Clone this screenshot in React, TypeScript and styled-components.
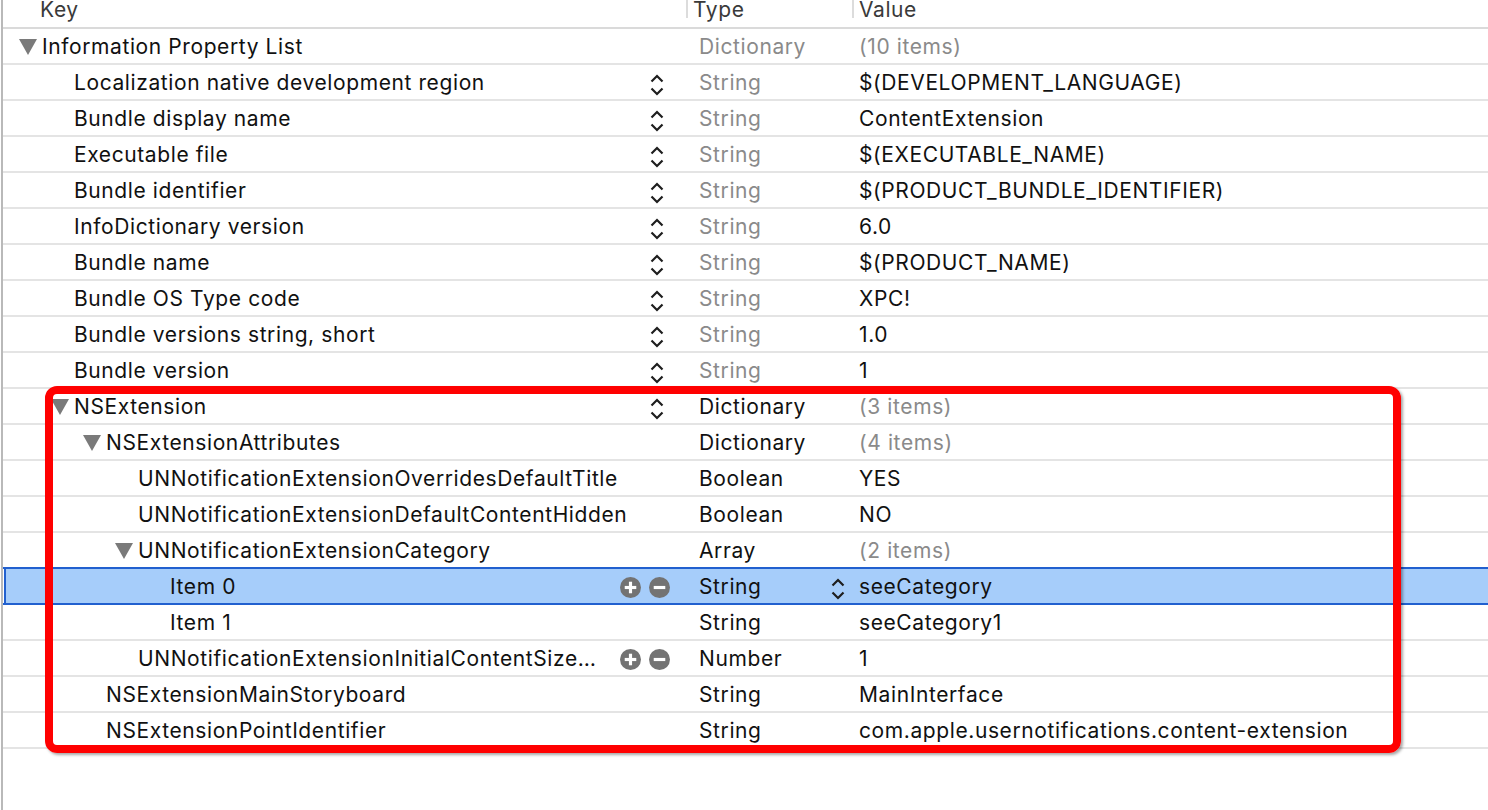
import React from "react";
import styled, { createGlobalStyle } from "styled-components";

type Entry = {
  key: string;
  level: number;
  open?: boolean;
  control?: "stepper" | "addremove";
  type: string;
  typeMuted?: boolean;
  value: string;
  valueMuted?: boolean;
  valueStepper?: boolean;
  selected?: boolean;
};

const entries: Entry[] = [
  { key: "Information Property List", level: 0, open: true, type: "Dictionary", typeMuted: true, value: "(10 items)", valueMuted: true },
  { key: "Localization native development region", level: 1, control: "stepper", type: "String", typeMuted: true, value: "$(DEVELOPMENT_LANGUAGE)" },
  { key: "Bundle display name", level: 1, control: "stepper", type: "String", typeMuted: true, value: "ContentExtension" },
  { key: "Executable file", level: 1, control: "stepper", type: "String", typeMuted: true, value: "$(EXECUTABLE_NAME)" },
  { key: "Bundle identifier", level: 1, control: "stepper", type: "String", typeMuted: true, value: "$(PRODUCT_BUNDLE_IDENTIFIER)" },
  { key: "InfoDictionary version", level: 1, control: "stepper", type: "String", typeMuted: true, value: "6.0" },
  { key: "Bundle name", level: 1, control: "stepper", type: "String", typeMuted: true, value: "$(PRODUCT_NAME)" },
  { key: "Bundle OS Type code", level: 1, control: "stepper", type: "String", typeMuted: true, value: "XPC!" },
  { key: "Bundle versions string, short", level: 1, control: "stepper", type: "String", typeMuted: true, value: "1.0" },
  { key: "Bundle version", level: 1, control: "stepper", type: "String", typeMuted: true, value: "1" },
  { key: "NSExtension", level: 1, open: true, control: "stepper", type: "Dictionary", value: "(3 items)", valueMuted: true },
  { key: "NSExtensionAttributes", level: 2, open: true, type: "Dictionary", value: "(4 items)", valueMuted: true },
  { key: "UNNotificationExtensionOverridesDefaultTitle", level: 3, type: "Boolean", value: "YES" },
  { key: "UNNotificationExtensionDefaultContentHidden", level: 3, type: "Boolean", value: "NO" },
  { key: "UNNotificationExtensionCategory", level: 3, open: true, type: "Array", value: "(2 items)", valueMuted: true },
  { key: "Item 0", level: 4, control: "addremove", type: "String", value: "seeCategory", valueStepper: true, selected: true },
  { key: "Item 1", level: 4, type: "String", value: "seeCategory1" },
  { key: "UNNotificationExtensionInitialContentSizeRatio", level: 3, control: "addremove", type: "Number", value: "1" },
  { key: "NSExtensionMainStoryboard", level: 2, type: "String", value: "MainInterface" },
  { key: "NSExtensionPointIdentifier", level: 2, type: "String", value: "com.apple.usernotifications.content-extension" },
];

const GlobalStyle = createGlobalStyle`
  body {
    margin: 0;
    background: #fff;
    font-family: Inter, "Noto Sans", "Liberation Sans", sans-serif;
    color: #111;
  }
`;

const Page = styled.div`
  position: relative;
  width: 1486px;
  height: 810px;
  margin-left: 1px;
  border-left: 2px solid #b9b9b9;
  overflow: hidden;
  font-size: 21px;
  letter-spacing: 0.6px;
`;

const Header = styled.div`
  display: grid;
  grid-template-columns: 683px 166px 1fr;
  height: 29px;
  border-bottom: 2px solid #dadada;
  box-sizing: border-box;
`;

const HeaderCell = styled.div<{ $pad: number; $rule?: boolean }>`
  height: 23px;
  padding-left: ${(p) => p.$pad}px;
  border-left: ${(p) => (p.$rule ? "2px solid #dcdcdc" : "none")};
  line-height: 20px;
  margin-top: -5px;
  padding-top: 5px;
  color: #3a3a3a;
  box-sizing: border-box;
`;

const Row = styled.div<{ $selected?: boolean }>`
  display: grid;
  grid-template-columns: 683px 166px 1fr;
  height: ${(p) => (p.$selected ? "38px" : "36px")};
  margin-top: ${(p) => (p.$selected ? "-2px" : "0")};
  box-sizing: border-box;
  border-top: ${(p) => (p.$selected ? "2px solid #2160cf" : "none")};
  border-bottom: 2px solid ${(p) => (p.$selected ? "#2160cf" : "#e4e4e4")};
  box-shadow: ${(p) => (p.$selected ? "inset 1px 0 0 #fff, inset 3px 0 0 #2160cf" : "none")};
  background: ${(p) => (p.$selected ? "#a6cdfa" : "transparent")};
`;

const KeyCell = styled.div<{ $level: number }>`
  display: flex;
  align-items: center;
  min-width: 0;
  padding-left: ${(p) => 16 + p.$level * 32}px;
`;

const Toggle = styled.span`
  width: 23px;
  flex: none;
  display: flex;
  align-items: center;
`;

const KeyText = styled.span`
  flex: 1;
  min-width: 0;
  white-space: nowrap;
  overflow: hidden;
  text-overflow: ellipsis;
  margin-right: 24px;
`;

const Controls = styled.span`
  flex: none;
  display: flex;
  align-items: center;
  gap: 8px;
  margin-right: 16px;
`;

const StepperSlot = styled.span`
  flex: none;
  display: flex;
  margin-right: 22px;
`;

const TypeCell = styled.div<{ $muted?: boolean }>`
  display: flex;
  align-items: center;
  justify-content: space-between;
  padding-left: 13px;
  padding-right: 7px;
  color: ${(p) => (p.$muted ? "#8a8a8a" : "#111")};
`;

const ValueCell = styled.div<{ $muted?: boolean }>`
  display: flex;
  align-items: center;
  padding-left: 7px;
  white-space: nowrap;
  color: ${(p) => (p.$muted ? "#8a8a8a" : "#111")};
`;

const Callout = styled.div`
  position: absolute;
  left: 42px;
  top: 386px;
  width: 1356px;
  height: 367px;
  box-sizing: border-box;
  border: 8px solid #ff0000;
  border-radius: 12px;
  box-shadow: 2px 2px 3px rgba(0, 0, 0, 0.35);
  pointer-events: none;
`;

const Disclosure = () => (
  <svg width="18" height="16" viewBox="0 0 18 16" style={{ marginTop: 2 }}>
    <path d="M0 0 H18 L9 16 Z" fill="#7a7a7a" />
  </svg>
);

const Stepper = () => (
  <svg width="14" height="22" viewBox="0 0 14 22" style={{ marginTop: 6 }}>
    <path d="M1.5 7.5 L7 2 L12.5 7.5 M1.5 14.5 L7 20 L12.5 14.5" fill="none" stroke="#1e1e1e" strokeWidth="2.2" />
  </svg>
);

const Round = ({ plus }: { plus?: boolean }) => (
  <svg width="21" height="21" viewBox="0 0 20 20" style={{ marginTop: 3 }}>
    <circle cx="10" cy="10" r="10" fill="#737373" />
    <rect x="4.5" y="8.5" width="11" height="3" fill="#fff" />
    {plus && <rect x="8.5" y="4.5" width="3" height="11" fill="#fff" />}
  </svg>
);

const PlistRow: React.FC<{ entry: Entry }> = ({ entry }) => (
  <Row $selected={entry.selected}>
    <KeyCell $level={entry.level}>
      <Toggle>{entry.open && <Disclosure />}</Toggle>
      <KeyText>{entry.key}</KeyText>
      {entry.control === "stepper" && (
        <StepperSlot>
          <Stepper />
        </StepperSlot>
      )}
      {entry.control === "addremove" && (
        <Controls>
          <Round plus />
          <Round />
        </Controls>
      )}
    </KeyCell>
    <TypeCell $muted={entry.typeMuted}>
      <span>{entry.type}</span>
      {entry.valueStepper && <Stepper />}
    </TypeCell>
    <ValueCell $muted={entry.valueMuted}>{entry.value}</ValueCell>
  </Row>
);

export default function App() {
  return (
    <>
      <GlobalStyle />
      <Page>
        <Header>
          <HeaderCell $pad={37}>Key</HeaderCell>
          <HeaderCell $pad={5} $rule>
            Type
          </HeaderCell>
          <HeaderCell $pad={5} $rule>
            Value
          </HeaderCell>
        </Header>
        {entries.map((e) => (
          <PlistRow key={e.key} entry={e} />
        ))}
        <Callout />
      </Page>
    </>
  );
}
